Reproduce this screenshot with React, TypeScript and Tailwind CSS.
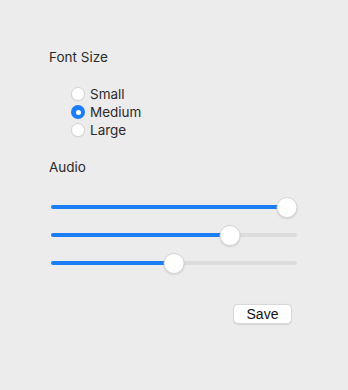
import React, { useState } from 'react';

const sizes = ['Small', 'Medium', 'Large'];

const Radio: React.FC<{ label: string; checked: boolean; onSelect: () => void }> = ({ label, checked, onSelect }) => (
  <button onClick={onSelect} className="flex h-[18px] items-center gap-[5px] text-left">
    {checked ? (
      <span className="flex h-[14px] w-[14px] items-center justify-center rounded-full bg-[#1a7ef6]">
        <span className="h-[5px] w-[5px] rounded-full bg-white" />
      </span>
    ) : (
      <span className="h-[14px] w-[14px] rounded-full border border-[#d4d4d4] bg-white shadow-[0_0.5px_1px_rgba(0,0,0,0.08)]" />
    )}
    <span className="text-[13.5px] leading-[16px] text-[#2b2b2b]">{label}</span>
  </button>
);

const Slider: React.FC<{ value: number }> = ({ value }) => {
  // thumb center travels between 10.5px and (width - 10.5px)
  const pos = `calc(10.5px + (100% - 21px) * ${value / 100})`;
  return (
    <div className="relative flex h-[28px] w-[246px] items-center">
      <div className="h-[4px] w-full rounded-full bg-[#dcdcdc]" />
      <div className="absolute left-0 h-[4px] rounded-full bg-[#1a7ef6]" style={{ width: pos }} />
      <div
        className="absolute h-[21px] w-[21px] -translate-x-1/2 rounded-full border border-[#d6d6d6] bg-white shadow-[0_1px_2px_rgba(0,0,0,0.12)]"
        style={{ left: pos }}
      />
    </div>
  );
};

export default function App() {
  const [size, setSize] = useState('Medium');

  return (
    <div
      className="h-[390px] w-[348px] bg-[#ececec] pl-[49px] pt-[49px]"
      style={{ fontFamily: 'Inter, "Liberation Sans", sans-serif' }}
    >
      <div className="text-[13.5px] leading-[16px] text-[#2b2b2b]">Font Size</div>

      <div className="mt-[20px] ml-[22px] flex flex-col">
        {sizes.map((s) => (
          <Radio key={s} label={s} checked={size === s} onSelect={() => setSize(s)} />
        ))}
      </div>

      <div className="mt-[20px] text-[13.5px] leading-[16px] text-[#2b2b2b]">Audio</div>

      <div className="mt-[18px] ml-[2px] flex flex-col">
        <Slider value={100} />
        <Slider value={75} />
        <Slider value={50} />
      </div>

      <div className="mt-[27px] flex">
        <button
          className="ml-[184px] h-[20px] w-[59px] rounded-[5px] border border-[#d8d8d8] bg-white text-[14px] leading-[18px] text-[#111] shadow-[0_0.5px_1px_rgba(0,0,0,0.1)]"
          style={{ fontFamily: '"Liberation Sans", sans-serif' }}
        >
          Save
        </button>
      </div>
    </div>
  );
}
